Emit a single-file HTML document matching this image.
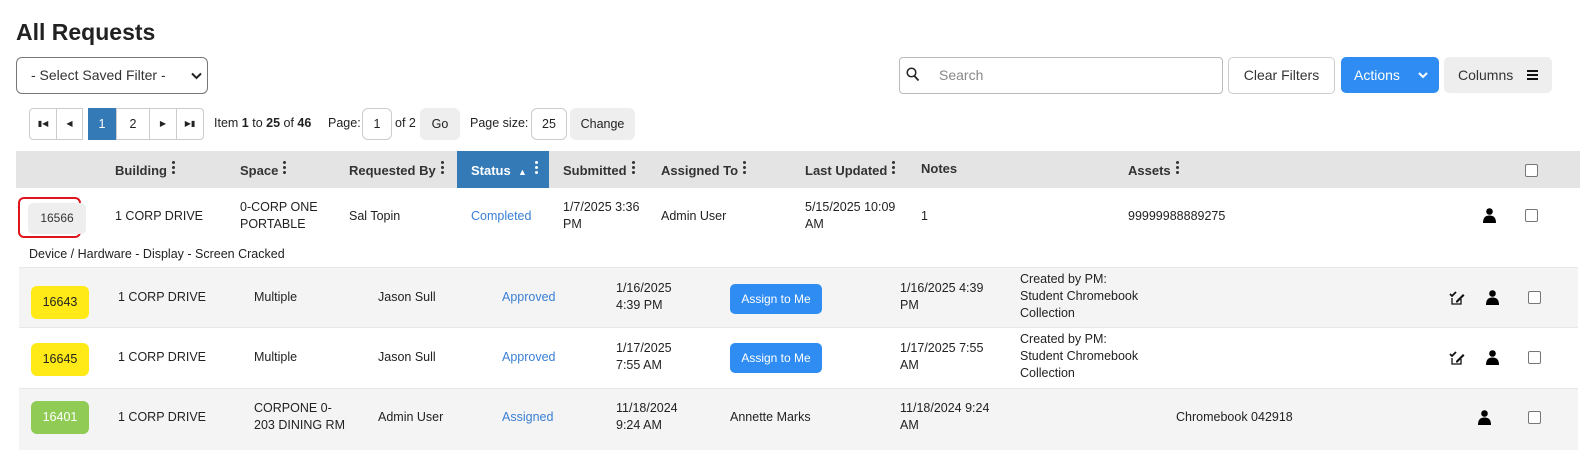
<!DOCTYPE html>
<html><head><meta charset="utf-8"><style>
*{box-sizing:border-box;margin:0;padding:0}
body{width:1596px;height:462px;background:#fff;font-family:"Liberation Sans",Arial,sans-serif;color:#222;position:relative;overflow:hidden;font-size:13px}
.a{position:absolute}
.t{position:absolute;line-height:17px;font-size:12.5px;color:#222}
.h{position:absolute;font-weight:bold;font-size:13px;color:#333;top:161px}
.dots{display:inline-block;width:3px;margin-left:5px;vertical-align:-1px}
.dots i{display:block;width:3px;height:3px;border-radius:50%;background:#333;margin-bottom:2px}
.cb{position:absolute;width:13px;height:13px;border:1px solid #767676;border-radius:2px;background:#fff}
.btn{position:absolute;border-radius:5px;font-size:13px;text-align:center}
.pg{position:absolute;top:108px;height:32px;border:1px solid #ccc;background:#fff;font-size:12.5px;line-height:30px;text-align:center}
.id{position:absolute;left:31px;width:58px;height:33px;border-radius:6px;text-align:center;line-height:33px;font-size:12.5px}
.bl{color:#3a7fd5}
.asg{position:absolute;left:730px;width:92px;height:30px;background:#2f8cf3;color:#fff;border-radius:5px;font-size:12px;line-height:30px;text-align:center}
</style></head><body>
<div class="a" style="left:16px;top:19px;font-size:23px;font-weight:bold;color:#222">All Requests</div>
<div class="a" style="left:16px;top:57px;width:192px;height:37px;border:1px solid #777;border-radius:6px;font-size:14px;line-height:35px;padding-left:14px;color:#333">- Select Saved Filter -
<svg class="a" style="left:174px;top:14px" width="11" height="8" viewBox="0 0 11 8"><path d="M1 1.5l4.5 4.5 4.5-4.5" stroke="#222" stroke-width="2" fill="none"/></svg></div>

<div class="a" style="left:899px;top:57px;width:324px;height:37px;border:1px solid #bbb;border-radius:4px"></div>
<svg class="a" style="left:906px;top:67px" width="14" height="15" viewBox="0 0 14 15"><circle cx="5.5" cy="5.5" r="4.3" stroke="#222" stroke-width="1.5" fill="none"/><path d="M8.5 9l4 4.5" stroke="#222" stroke-width="1.7"/></svg>
<div class="a" style="left:939px;top:67px;font-size:14px;color:#888">Search</div>
<div class="btn" style="left:1228px;top:57px;width:107px;height:37px;border:1px solid #ccc;line-height:35px;color:#333;font-size:14px">Clear Filters</div>
<div class="btn" style="left:1341px;top:57px;width:98px;height:36px;background:#2f8cf3;color:#fff;line-height:36px;font-size:14px;text-align:left;padding-left:13px">Actions
<svg class="a" style="left:77px;top:15px" width="10" height="7" viewBox="0 0 10 7"><path d="M1 1l4 4 4-4" stroke="#fff" stroke-width="2" fill="none"/></svg></div>
<div class="btn" style="left:1444px;top:57px;width:108px;height:36px;background:#eee;line-height:36px;font-size:14px;color:#333;text-align:left;padding-left:14px">Columns
<span class="a" style="left:83px;top:13px;width:11px;height:10px;border-top:2px solid #111;border-bottom:2px solid #111"><span class="a" style="left:0;top:2px;width:11px;height:2px;background:#111"></span></span></div>

<div class="pg" style="left:29px;width:28px;border-radius:4px 0 0 4px;font-size:8px">&#9646;&#9664;</div>
<div class="pg" style="left:56px;width:27px;font-size:8px">&#9664;</div>
<div class="pg" style="left:88px;width:28px;background:#337ab7;border-color:#337ab7;color:#fff">1</div>
<div class="pg" style="left:116px;width:34px">2</div>
<div class="pg" style="left:149px;width:28px;font-size:8px">&#9654;</div>
<div class="pg" style="left:176px;width:28px;border-radius:0 4px 4px 0;font-size:8px">&#9654;&#9646;</div>
<div class="a" style="left:214px;top:116px;font-size:12.5px">Item <b>1</b> to <b>25</b> of <b>46</b></div>
<div class="a" style="left:328px;top:116px;font-size:12.5px">Page:</div>
<div class="pg" style="left:362px;width:30px;border-radius:6px">1</div>
<div class="a" style="left:395px;top:116px;font-size:12.5px">of 2</div>
<div class="pg" style="left:420px;width:40px;background:#eee;border-color:#eee;border-radius:6px">Go</div>
<div class="a" style="left:470px;top:116px;font-size:12.5px">Page size:</div>
<div class="pg" style="left:531px;width:36px;border-radius:6px">25</div>
<div class="pg" style="left:570px;width:65px;background:#eee;border-color:#eee;border-radius:6px">Change</div>

<div class="a" style="left:16px;top:151px;width:1564px;height:37px;background:#e4e4e4"></div>
<div class="a" style="left:457px;top:151px;width:92px;height:37px;background:#337ab7"></div>
<div class="h" style="left:115px">Building<span class="dots"><i></i><i></i><i></i></span></div>
<div class="h" style="left:240px">Space<span class="dots"><i></i><i></i><i></i></span></div>
<div class="h" style="left:349px">Requested By<span class="dots"><i></i><i></i><i></i></span></div>
<div class="h" style="left:471px;color:#fff">Status &nbsp;<span style="font-size:9px">&#9650;</span><span class="dots" style="margin-left:8px"><i style="background:#fff"></i><i style="background:#fff"></i><i style="background:#fff"></i></span></div>
<div class="h" style="left:563px">Submitted<span class="dots"><i></i><i></i><i></i></span></div>
<div class="h" style="left:661px">Assigned To<span class="dots"><i></i><i></i><i></i></span></div>
<div class="h" style="left:805px">Last Updated<span class="dots"><i></i><i></i><i></i></span></div>
<div class="h" style="left:921px">Notes</div>
<div class="h" style="left:1128px">Assets<span class="dots"><i></i><i></i><i></i></span></div>
<div class="cb" style="left:1525px;top:164px"></div>

<div class="a" style="left:18px;top:197px;width:63px;height:41px;border:2.5px solid #e0141c;border-radius:6px"></div>
<div class="a" style="left:28px;top:203px;width:58px;height:31px;background:#eee;border-radius:5px;text-align:center;line-height:31px;font-size:12px;color:#333">16566</div>
<div class="t" style="left:115px;top:208px">1 CORP DRIVE</div>
<div class="t" style="left:240px;top:199px">0-CORP ONE<br>PORTABLE</div>
<div class="t" style="left:349px;top:208px">Sal Topin</div>
<div class="t bl" style="left:471px;top:208px">Completed</div>
<div class="t" style="left:563px;top:199px">1/7/2025 3:36<br>PM</div>
<div class="t" style="left:661px;top:208px">Admin User</div>
<div class="t" style="left:805px;top:199px">5/15/2025 10:09<br>AM</div>
<div class="t" style="left:921px;top:208px">1</div>
<div class="t" style="left:1128px;top:208px">99999988889275</div>
<svg class="a" style="left:1483px;top:208px" width="13" height="15" viewBox="0 0 13 15"><circle cx="6.5" cy="3.5" r="3.3"/><path d="M0 15c0-5 2-7.5 6.5-7.5S13 10 13 15z"/></svg>
<div class="cb" style="left:1525px;top:209px"></div>
<div class="t" style="left:29px;top:246px">Device / Hardware - Display - Screen Cracked</div>

<div class="a" style="left:19px;top:267px;width:1559px;height:60px;background:#f4f4f4;border-top:1px solid #e8e8e8"></div>
<div class="a" style="left:19px;top:327px;width:1559px;height:61px;background:#fff;border-top:1px solid #e8e8e8"></div>
<div class="a" style="left:19px;top:388px;width:1559px;height:62px;background:#f4f4f4;border-top:1px solid #e8e8e8"></div>

<div class="id" style="top:286px;background:#ffea17">16643</div>
<div class="t" style="left:118px;top:289px">1 CORP DRIVE</div>
<div class="t" style="left:254px;top:289px">Multiple</div>
<div class="t" style="left:378px;top:289px">Jason Sull</div>
<div class="t bl" style="left:502px;top:289px">Approved</div>
<div class="t" style="left:616px;top:280px">1/16/2025<br>4:39 PM</div>
<div class="asg" style="top:284px">Assign to Me</div>
<div class="t" style="left:900px;top:280px">1/16/2025 4:39<br>PM</div>
<div class="t" style="left:1020px;top:271px">Created by PM:<br>Student Chromebook<br>Collection</div>

<div class="id" style="top:343px;background:#ffea17">16645</div>
<div class="t" style="left:118px;top:349px">1 CORP DRIVE</div>
<div class="t" style="left:254px;top:349px">Multiple</div>
<div class="t" style="left:378px;top:349px">Jason Sull</div>
<div class="t bl" style="left:502px;top:349px">Approved</div>
<div class="t" style="left:616px;top:340px">1/17/2025<br>7:55 AM</div>
<div class="asg" style="top:343px">Assign to Me</div>
<div class="t" style="left:900px;top:340px">1/17/2025 7:55<br>AM</div>
<div class="t" style="left:1020px;top:331px">Created by PM:<br>Student Chromebook<br>Collection</div>

<div class="id" style="top:401px;background:#8fcb55;color:#fff">16401</div>
<div class="t" style="left:118px;top:409px">1 CORP DRIVE</div>
<div class="t" style="left:254px;top:400px">CORPONE 0-<br>203 DINING RM</div>
<div class="t" style="left:378px;top:409px">Admin User</div>
<div class="t bl" style="left:502px;top:409px">Assigned</div>
<div class="t" style="left:616px;top:400px">11/18/2024<br>9:24 AM</div>
<div class="t" style="left:730px;top:409px">Annette Marks</div>
<div class="t" style="left:900px;top:400px">11/18/2024 9:24<br>AM</div>
<div class="t" style="left:1176px;top:409px">Chromebook 042918</div>

<svg class="a" style="left:1449px;top:290px" width="16" height="15" viewBox="0 0 16 15"><path d="M1 4l2 2 4-4" stroke="#111" stroke-width="1.8" fill="none"/><path d="M3 8v6h9V9" stroke="#111" stroke-width="1.3" fill="none"/><path d="M7 11l7-7 1.5 1.5-7 7H7z" fill="#111"/></svg>
<svg class="a" style="left:1449px;top:350px" width="16" height="15" viewBox="0 0 16 15"><path d="M1 4l2 2 4-4" stroke="#111" stroke-width="1.8" fill="none"/><path d="M3 8v6h9V9" stroke="#111" stroke-width="1.3" fill="none"/><path d="M7 11l7-7 1.5 1.5-7 7H7z" fill="#111"/></svg>
<svg class="a" style="left:1486px;top:290px" width="13" height="15" viewBox="0 0 13 15"><circle cx="6.5" cy="3.5" r="3.3"/><path d="M0 15c0-5 2-7.5 6.5-7.5S13 10 13 15z"/></svg>
<svg class="a" style="left:1486px;top:350px" width="13" height="15" viewBox="0 0 13 15"><circle cx="6.5" cy="3.5" r="3.3"/><path d="M0 15c0-5 2-7.5 6.5-7.5S13 10 13 15z"/></svg>
<svg class="a" style="left:1478px;top:410px" width="13" height="15" viewBox="0 0 13 15"><circle cx="6.5" cy="3.5" r="3.3"/><path d="M0 15c0-5 2-7.5 6.5-7.5S13 10 13 15z"/></svg>
<div class="cb" style="left:1528px;top:291px"></div>
<div class="cb" style="left:1528px;top:351px"></div>
<div class="cb" style="left:1528px;top:411px"></div>
</body></html>
